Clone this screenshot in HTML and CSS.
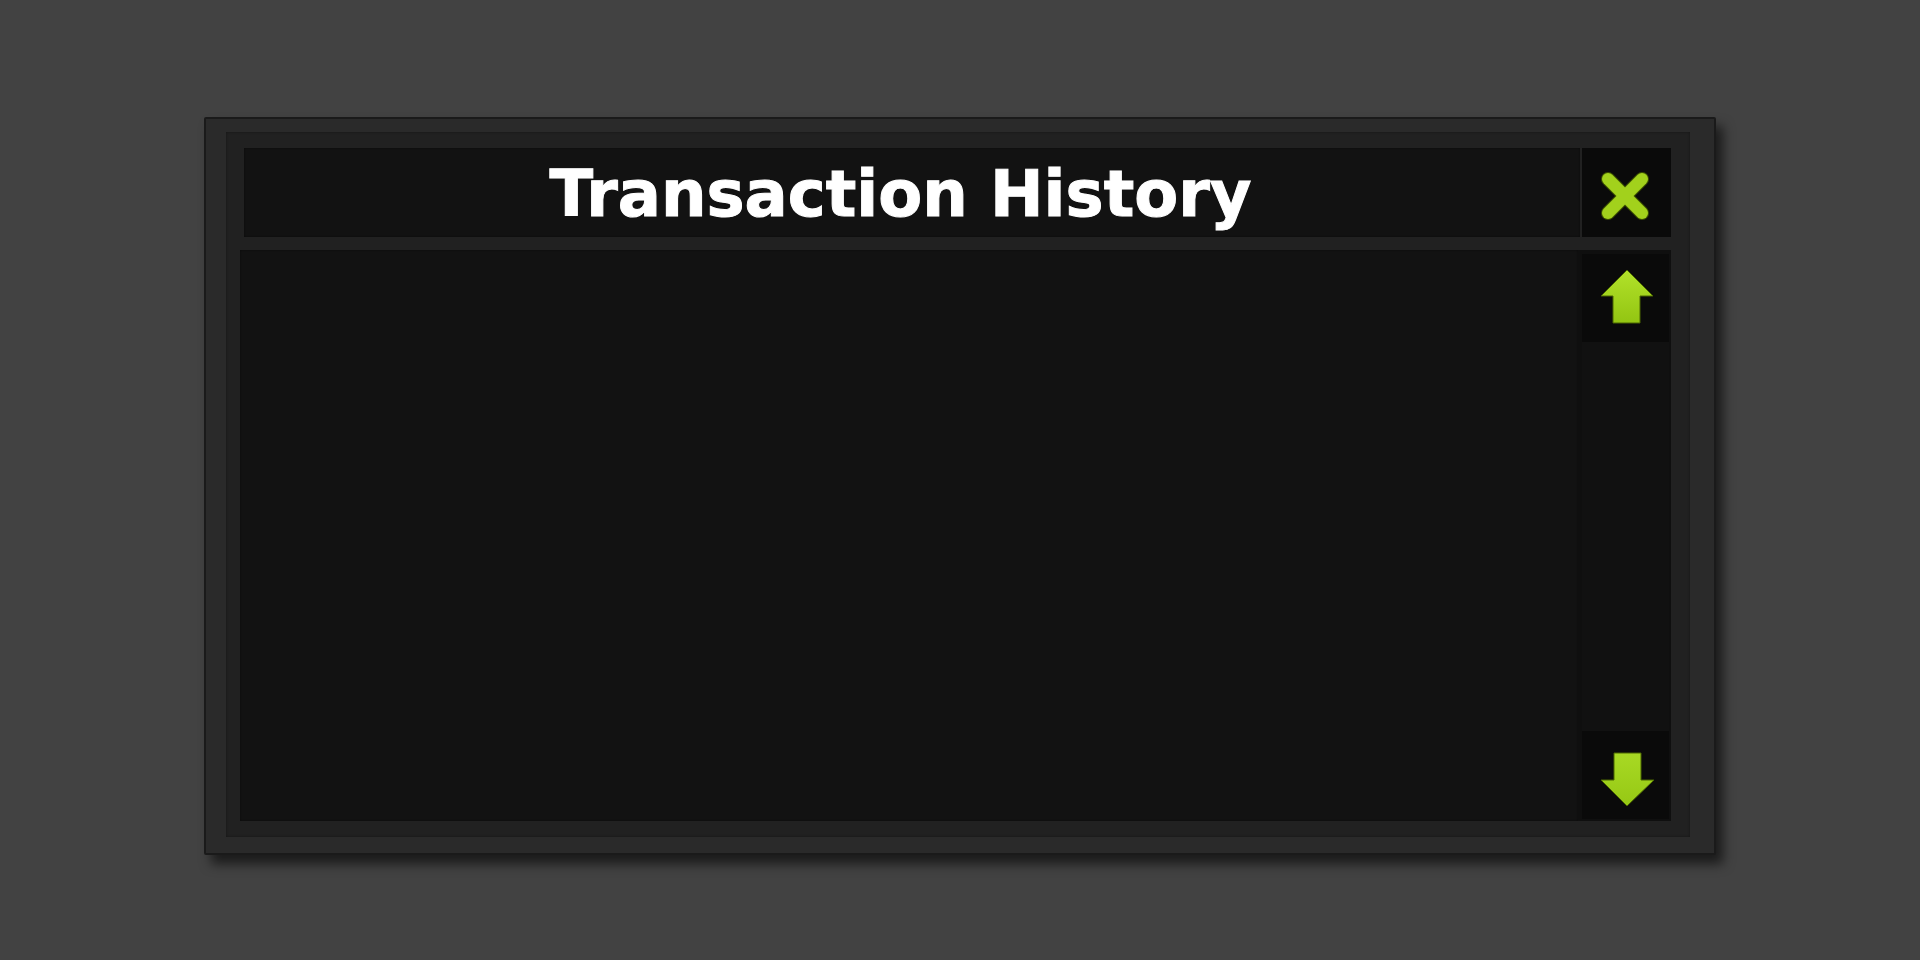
FILE: index.html
```html
<!DOCTYPE html>
<html>
<head>
<meta charset="utf-8">
<link rel="stylesheet" href="styles.css">
</head>
<body>
<div class="window">
  <div class="frame">
    <div class="header">
      <div class="title">Transaction History</div>
      <div class="btn close">
        <svg width="89" height="88" viewBox="0 0 89 88">
          <g stroke="#3d5200" stroke-width="14" stroke-linecap="round">
            <line x1="26" y1="30" x2="60" y2="64"/>
            <line x1="60" y1="30" x2="26" y2="64"/>
          </g>
          <g stroke="#a2d11c" stroke-width="12" stroke-linecap="round">
            <line x1="26" y1="30" x2="60" y2="64"/>
            <line x1="60" y1="30" x2="26" y2="64"/>
          </g>
        </svg>
      </div>
    </div>
    <div class="body">
      <div class="content"></div>
      <div class="scroll">
        <div class="btn sbtn">
          <svg width="87" height="88" viewBox="0 0 87 88">
            <defs>
              <linearGradient id="gu" x1="0" y1="0" x2="0" y2="1">
                <stop offset="0" stop-color="#b2e22a"/>
                <stop offset="1" stop-color="#93c512"/>
              </linearGradient>
            </defs>
            <path d="M45 16 L71 42 L58 42 L58 69 L31 69 L31 42 L19 42 Z" fill="url(#gu)" stroke="#4a6600" stroke-width="1"/>
          </svg>
        </div>
        <div class="track"></div>
        <div class="btn sbtn">
          <svg width="87" height="88" viewBox="0 0 87 88">
            <defs>
              <linearGradient id="gd" x1="0" y1="0" x2="0" y2="1">
                <stop offset="0" stop-color="#a8d924"/>
                <stop offset="1" stop-color="#96c814"/>
              </linearGradient>
            </defs>
            <path d="M32 22 L59 22 L59 49 L72 49 L45 75 L19 49 L32 49 Z" fill="url(#gd)" stroke="#4a6600" stroke-width="1"/>
          </svg>
        </div>
      </div>
    </div>
  </div>
</div>
</body>
</html>
```

FILE: styles.css
```css
html, body {
  margin: 0;
  padding: 0;
}
body {
  background: #424242;
  width: 1920px;
  height: 960px;
  overflow: hidden;
  font-family: "DejaVu Sans", Verdana, sans-serif;
}
.window {
  box-sizing: border-box;
  width: 1512px;
  height: 738px;
  margin: 117px 0 0 204px;
  background: #2a2a2a;
  border: 2px solid #1a1a1a;
  border-radius: 2px;
  padding: 13px 24px 16px 20px;
  box-shadow: 7px 9px 12px rgba(0, 0, 0, 0.6);
}
.frame {
  box-sizing: border-box;
  height: 100%;
  background: #212121;
  padding: 16px 19px 16px 14px;
  display: grid;
  grid-template-rows: 89px 1fr;
  row-gap: 13px;
  box-shadow: inset 0 0 3px rgba(0, 0, 0, 0.4);
}
.header {
  margin-left: 4px;
  display: grid;
  grid-template-columns: 1fr 89px;
  column-gap: 2px;
}
.title {
  background: #121212;
  color: #ffffff;
  font-weight: bold;
  font-size: 64px;
  line-height: 85px;
  padding-top: 4px;
  padding-right: 23px;
  text-align: center;
  white-space: nowrap;
  -webkit-text-stroke: 1px #ffffff;
  box-shadow: inset 0 0 2px rgba(0, 0, 0, 0.6);
}
.btn {
  background: #0a0a0a;
  display: flex;
  align-items: center;
  justify-content: center;
}
.btn svg {
  display: block;
}
.body {
  display: grid;
  grid-template-columns: 1fr 93px;
  min-height: 0;
}
.content {
  background: #121212;
  box-shadow: inset 0 0 2px rgba(0, 0, 0, 0.6);
}
.scroll {
  background: #0f0f0f;
  padding: 4px 2px 2px 4px;
  display: grid;
  grid-template-rows: 88px 1fr 88px;
}
.track {
  background: #111111;
}
```
